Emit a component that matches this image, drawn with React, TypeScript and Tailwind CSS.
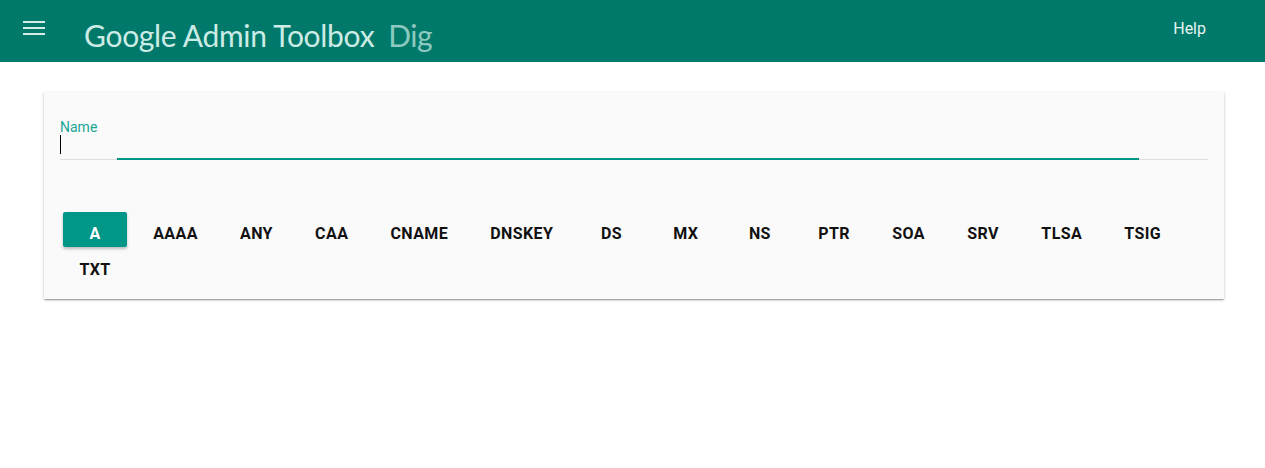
import { useState } from 'react';

const RECORD_TYPES = [
  'A', 'AAAA', 'ANY', 'CAA', 'CNAME', 'DNSKEY', 'DS', 'MX', 'NS',
  'PTR', 'SOA', 'SRV', 'TLSA', 'TSIG', 'TXT',
];

export default function App() {
  const [selected, setSelected] = useState('A');

  return (
    <div className="min-h-[468px] bg-white font-['Roboto',sans-serif]">
      {/* Toolbar */}
      <header className="flex h-[62px] items-center bg-[#00796b] pr-[59px]">
        <button className="mb-[6px] ml-[23px] flex h-[14px] w-[22px] flex-col justify-between" title="Menu">
          <span className="block h-[2px] w-[22px] bg-[#d6eee9]" />
          <span className="block h-[2px] w-[22px] bg-[#d6eee9]" />
          <span className="block h-[2px] w-[22px] bg-[#d6eee9]" />
        </button>
        <div className="ml-[39px] mt-[9px] flex items-baseline font-['Lato',sans-serif]">
          <span className="text-[30px] tracking-[-0.3px] text-[#cdebe5]">Google Admin Toolbox</span>
          <span className="ml-[14px] text-[30px] tracking-[-0.5px] text-[#8ccabf]">Dig</span>
        </div>
        <div className="flex-1" />
        <a className="mb-[5px] text-[16px] text-[#e6f4f1]">Help</a>
      </header>

      {/* Card */}
      <div className="ml-[44px] mr-[41px] mt-[30px] bg-[#fafafa] px-4 pb-[16px] pt-[27px] shadow-[0_1px_3px_rgba(0,0,0,0.2),0_1px_1px_rgba(0,0,0,0.14),0_2px_1px_-1px_rgba(0,0,0,0.12)]">
        <label className="block text-[14px] leading-[16px] text-[#1ba597]">Name</label>
        <div className="relative h-[25px]">
          <span className="absolute left-0 top-0 h-[19px] w-[1px] bg-black" />
          <div className="absolute bottom-0 left-0 right-0 h-[1px] bg-[#dedede]" />
          <div className="absolute bottom-0 left-[57px] right-[69px] h-[2px] bg-[#009688]" />
        </div>

        <div className="ml-[3px] mt-[52px] flex flex-wrap gap-x-[10.2px] gap-y-[1px]">
          {RECORD_TYPES.map((t) => (
            <button
              key={t}
              onClick={() => setSelected(t)}
              className={
                t === selected
                  ? 'h-[35px] min-w-[64px] rounded-[2px] bg-[#009688] px-4 pt-[9px] text-[16px] leading-[20px] font-bold tracking-[0.4px] text-white shadow-[0_2px_3px_rgba(0,0,0,0.25)]'
                  : 'h-[35px] min-w-[64px] rounded-[2px] px-4 pt-[9px] text-[16px] leading-[20px] font-bold tracking-[0.4px] text-[#111]'
              }
            >
              {t}
            </button>
          ))}
        </div>
      </div>
    </div>
  );
}
